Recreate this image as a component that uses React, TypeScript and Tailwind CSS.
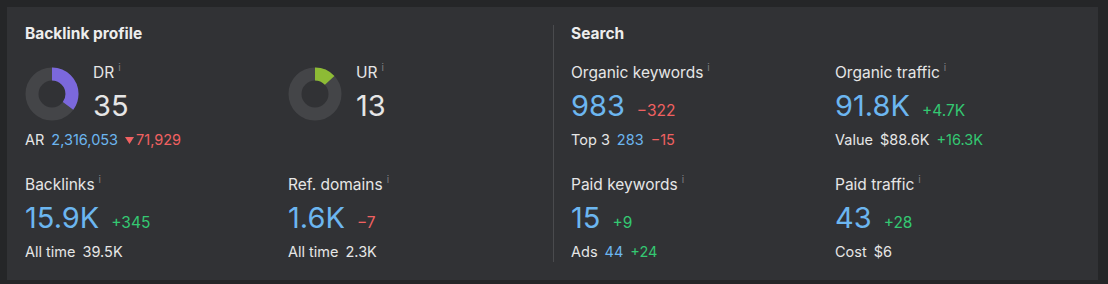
import React from "react";

type Tone = "blue" | "red" | "green" | "plain";

const toneClass: Record<Tone, string> = {
  blue: "text-[#6cb6f0]",
  red: "text-[#f06161]",
  green: "text-[#34c872]",
  plain: "text-[#e6e6e6]",
};

function Info() {
  return (
    <span className="relative -top-[7px] ml-[4px] text-[10px] leading-none text-[#7d7e82]">
      i
    </span>
  );
}

function Donut({ value, color }: { value: number; color: string }) {
  const r = 20;
  const c = 2 * Math.PI * r;
  return (
    <svg width="54" height="54" viewBox="0 0 54 54" className="shrink-0">
      <circle cx="27" cy="27" r={r} fill="none" stroke="#444548" strokeWidth="13" />
      <circle
        cx="27"
        cy="27"
        r={r}
        fill="none"
        stroke={color}
        strokeWidth="13"
        strokeDasharray={`${(c * value) / 100} ${c}`}
        transform="rotate(-90 27 27)"
      />
    </svg>
  );
}

function Sub({ items }: { items: { text: string; tone: Tone; arrow?: boolean }[] }) {
  return (
    <div className="mt-[6px] flex h-5 items-center gap-[7px] text-[14.5px] leading-5">
      {items.map((it, i) => (
        <span key={i} className={`flex items-center ${toneClass[it.tone]}`}>
          {it.arrow && (
            <svg width="9" height="7" viewBox="0 0 9 7" className="mr-[2px]">
              <polygon points="0,0 9,0 4.5,7" fill="#f06161" />
            </svg>
          )}
          {it.text}
        </span>
      ))}
    </div>
  );
}

function Head({
  label,
  value,
  delta,
  deltaTone,
  valueTone = "blue",
}: {
  label: string;
  value: string;
  delta?: string;
  deltaTone?: Tone;
  valueTone?: Tone;
}) {
  return (
    <div>
      <div className="h-5 text-[15.5px] leading-5 text-[#e6e6e6]">
        {label}
        <Info />
      </div>
      <div className="mt-[5px] flex h-9 items-baseline gap-[12px] leading-9">
        <span className={`text-[29px] ${toneClass[valueTone]}`}>{value}</span>
        {delta && deltaTone && (
          <span className={`text-[15.5px] ${toneClass[deltaTone]}`}>{delta}</span>
        )}
      </div>
    </div>
  );
}

export default function App() {
  return (
    <div
      className="h-[284px] w-[1108px] bg-[#252628] pl-[7px] pt-[7px]"
      style={{ fontFamily: "Inter, 'Noto Sans', sans-serif" }}
    >
      <div className="flex h-[273px] w-[1091px] bg-[#313235] py-[18px]">
        {/* Backlink profile */}
        <div className="box-border w-[547px] border-r border-[#4a4b4e] pl-[18px]">
          <div className="-mt-[1px] h-5 text-[15.5px] font-bold leading-5 text-[#ededed]">
            Backlink profile
          </div>
          <div className="mt-[19px] grid grid-cols-[263px_263px]">
            <div>
              <div className="flex items-center gap-[14px]">
                <Donut value={35} color="#7b68dc" />
                <Head label="DR" value="35" valueTone="plain" />
              </div>
              <Sub
                items={[
                  { text: "AR", tone: "plain" },
                  { text: "2,316,053", tone: "blue" },
                  { text: "71,929", tone: "red", arrow: true },
                ]}
              />
            </div>
            <div>
              <div className="flex items-center gap-[14px]">
                <Donut value={13} color="#8dbb35" />
                <Head label="UR" value="13" valueTone="plain" />
              </div>
            </div>
          </div>
          <div className="mt-[25px] grid grid-cols-[263px_263px]">
            <div>
              <Head label="Backlinks" value="15.9K" delta="+345" deltaTone="green" />
              <Sub
                items={[
                  { text: "All time", tone: "plain" },
                  { text: "39.5K", tone: "plain" },
                ]}
              />
            </div>
            <div>
              <Head label="Ref. domains" value="1.6K" delta="−7" deltaTone="red" />
              <Sub
                items={[
                  { text: "All time", tone: "plain" },
                  { text: "2.3K", tone: "plain" },
                ]}
              />
            </div>
          </div>
        </div>

        {/* Search */}
        <div className="pl-[17px]">
          <div className="-mt-[1px] h-5 text-[15.5px] font-bold leading-5 text-[#ededed]">
            Search
          </div>
          <div className="mt-[19px] grid grid-cols-[264px_240px]">
            <div>
              <Head label="Organic keywords" value="983" delta="−322" deltaTone="red" />
              <Sub
                items={[
                  { text: "Top 3", tone: "plain" },
                  { text: "283", tone: "blue" },
                  { text: "−15", tone: "red" },
                ]}
              />
            </div>
            <div>
              <Head label="Organic traffic" value="91.8K" delta="+4.7K" deltaTone="green" />
              <Sub
                items={[
                  { text: "Value", tone: "plain" },
                  { text: "$88.6K", tone: "plain" },
                  { text: "+16.3K", tone: "green" },
                ]}
              />
            </div>
          </div>
          <div className="mt-[25px] grid grid-cols-[264px_240px]">
            <div>
              <Head label="Paid keywords" value="15" delta="+9" deltaTone="green" />
              <Sub
                items={[
                  { text: "Ads", tone: "plain" },
                  { text: "44", tone: "blue" },
                  { text: "+24", tone: "green" },
                ]}
              />
            </div>
            <div>
              <Head label="Paid traffic" value="43" delta="+28" deltaTone="green" />
              <Sub
                items={[
                  { text: "Cost", tone: "plain" },
                  { text: "$6", tone: "plain" },
                ]}
              />
            </div>
          </div>
        </div>
      </div>
    </div>
  );
}
